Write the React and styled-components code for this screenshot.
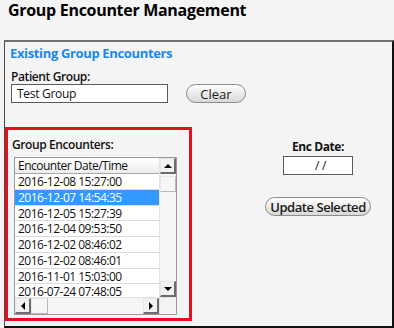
import React from 'react';
import styled, { createGlobalStyle } from 'styled-components';

const GlobalStyle = createGlobalStyle`
  html, body {
    margin: 0;
    padding: 0;
    background: #f4f4f4;
  }
  * {
    box-sizing: border-box;
  }
`;

const Page = styled.div`
  width: 394px;
  height: 328px;
  display: flex;
  flex-direction: column;
  background: #f4f4f4;
  font-family: "Open Sans", "Noto Sans", sans-serif;
  color: #111;
  overflow: hidden;
`;

const Title = styled.h1`
  margin: 0;
  height: 40px;
  padding: 0 0 0 8px;
  font-size: 16px;
  line-height: 20px;
  font-weight: 700;
  letter-spacing: -0.3px;
  color: #000;
`;

const Panel = styled.section`
  flex: 1;
  margin-left: 4px;
  border-top: 2px solid #707070;
  border-left: 1px solid #4a4a4a;
  border-right: 2px solid #111;
  border-bottom: 2px solid #111;
  display: flex;
  flex-direction: column;
`;

const PanelTitle = styled.h2`
  margin: 0;
  padding: 1px 0 0 5px;
  height: 27px;
  font-size: 13px;
  line-height: 20px;
  font-weight: 700;
  letter-spacing: -0.35px;
  color: #1b88f2;
`;

const Label = styled.div`
  font-size: 12px;
  line-height: 15px;
  font-weight: ${p => (p.$bold ? 700 : 600)};
  letter-spacing: -0.4px;
  color: #111;
  text-align: ${p => (p.$center ? 'center' : 'left')};
`;

const PatientBlock = styled.div`
  padding-left: 6px;
  display: flex;
  flex-direction: column;
`;

const InputRow = styled.div`
  display: flex;
  align-items: center;
  gap: 18px;
`;

const TextBox = styled.div`
  width: ${p => p.$w}px;
  height: 19px;
  border: 1px solid #5a5a5a;
  background: #fff;
  font-size: 12px;
  line-height: 17px;
  letter-spacing: -0.3px;
  padding-left: 5px;
  color: #111;
  text-align: ${p => (p.$center ? 'center' : 'left')};
`;

const PillButton = styled.button`
  width: ${p => p.$w}px;
  height: 19px;
  padding: 0;
  border: 1px solid #8c8c8c;
  border-radius: 10px;
  background: linear-gradient(#fdfdfd, #e8e8e8 60%, #d8d8d8);
  font-family: inherit;
  font-size: 13px;
  line-height: 16px;
  white-space: nowrap;
  letter-spacing: ${p => (p.$bold ? '-0.45px' : '0')};
  color: #1a1a1a;
  font-weight: ${p => (p.$bold ? 600 : 400)};
  margin-top: ${p => p.$mt || 0}px;
`;

const Lower = styled.div`
  display: grid;
  grid-template-columns: 187px 1fr;
  margin-top: 24px;
`;

const RedBox = styled.div`
  height: 194px;
  border: 3px solid #e3101f;
  padding: 7px 0 0 4px;
  display: flex;
  flex-direction: column;
  gap: 5px;
`;

const ListBox = styled.div`
  width: 163px;
  height: 158px;
  margin-left: 2px;
  border: 1px solid #9a9a9a;
  background: #fff;
  display: grid;
  grid-template-columns: 1fr 17px;
  grid-template-rows: 1fr 17px;
`;

const ListArea = styled.div`
  overflow: hidden;
  display: flex;
  flex-direction: column;
`;

const HeaderCell = styled.div`
  flex: none;
  height: 16px;
  border-bottom: 1px solid #a8a8a8;
  background: linear-gradient(#ffffff, #ededed);
  font-size: 12px;
  line-height: 15px;
  letter-spacing: -0.5px;
  padding-left: 3px;
  color: #111;
`;

const Row = styled.div`
  flex: none;
  height: 15.75px;
  border-bottom: 1px solid #dcdcdc;
  font-size: 12px;
  line-height: 15px;
  letter-spacing: -0.5px;
  padding-left: 3px;
  white-space: nowrap;
  background: ${p => (p.$selected ? '#3399ff' : '#fff')};
  color: ${p => (p.$selected ? '#fff' : '#111')};
`;

const VScroll = styled.div`
  display: flex;
  flex-direction: column;
  background: #f5f5f5;
  border-left: 1px solid #e4e4e4;
`;

const HScroll = styled.div`
  display: flex;
  background: #f5f5f5;
  border-top: 1px solid #e4e4e4;
`;

const ScrollBtn = styled.div`
  flex: none;
  width: ${p => (p.$horizontal ? '16px' : '100%')};
  height: ${p => (p.$horizontal ? '100%' : '16px')};
  background: #f2f2f2;
  border-top: 1px solid #e6e6e6;
  border-left: 1px solid #e6e6e6;
  border-right: 2px solid #6c6c6c;
  border-bottom: 2px solid #6c6c6c;
  display: flex;
  align-items: center;
  justify-content: center;
  margin-top: ${p => (p.$push ? 'auto' : '0')};
  margin-left: ${p => (p.$pushLeft ? 'auto' : '0')};
`;

const Thumb = styled.div`
  flex: none;
  width: ${p => (p.$horizontal ? '17px' : '100%')};
  height: ${p => (p.$horizontal ? '100%' : '16px')};
  margin-top: ${p => (p.$horizontal ? 0 : 2)}px;
  background: #f6f6f6;
  border-top: 1px solid #e8e8e8;
  border-left: 1px solid #e8e8e8;
  border-right: 1px solid #b8b8b8;
  border-bottom: 1px solid #b8b8b8;
`;

const Corner = styled.div`
  background: #f3f3f3;
  border-top: 1px solid #e4e4e4;
  border-left: 1px solid #e4e4e4;
`;

const RightCol = styled.div`
  padding: 12px 0 0 52px;
  display: flex;
  flex-direction: column;
  align-items: center;
`;

const DateWrap = styled.div`
  margin-top: 2px;
`;

const Arrow = ({ dir }) => {
  const pts = {
    up: '0,5 4,1 8,5',
    down: '0,1 4,5 8,1',
    left: '5,0 1,4 5,8',
    right: '1,0 5,4 1,8',
  }[dir];
  const w = dir === 'up' || dir === 'down' ? 8 : 6;
  const h = dir === 'up' || dir === 'down' ? 6 : 8;
  return (
    <svg width={w} height={h} viewBox={`0 0 ${w} ${h}`}>
      <polygon points={pts} fill="#000" />
    </svg>
  );
};

const encounters = [
  '2016-12-08 15:27:00',
  '2016-12-07 14:54:35',
  '2016-12-05 15:27:39',
  '2016-12-04 09:53:50',
  '2016-12-02 08:46:02',
  '2016-12-02 08:46:01',
  '2016-11-01 15:03:00',
  '2016-07-24 07:48:05',
];

const App = () => {
  return (
    <Page>
      <GlobalStyle />
      <Title>Group Encounter Management</Title>
      <Panel>
        <PanelTitle>Existing Group Encounters</PanelTitle>
        <PatientBlock>
          <Label>Patient Group:</Label>
          <InputRow>
            <TextBox $w={157}>Test Group</TextBox>
            <PillButton $w={60}>Clear</PillButton>
          </InputRow>
        </PatientBlock>
        <Lower>
          <RedBox>
            <Label>Group Encounters:</Label>
            <ListBox>
              <ListArea>
                <HeaderCell>Encounter Date/Time</HeaderCell>
                {encounters.map((e, i) => (
                  <Row key={i} $selected={i === 1}>{e}</Row>
                ))}
              </ListArea>
              <VScroll>
                <ScrollBtn><Arrow dir="up" /></ScrollBtn>
                <Thumb />
                <ScrollBtn $push><Arrow dir="down" /></ScrollBtn>
              </VScroll>
              <HScroll>
                <ScrollBtn $horizontal><Arrow dir="left" /></ScrollBtn>
                <Thumb $horizontal />
                <ScrollBtn $horizontal $pushLeft><Arrow dir="right" /></ScrollBtn>
              </HScroll>
              <Corner />
            </ListBox>
          </RedBox>
          <RightCol>
            <Label $center $bold>Enc Date:</Label>
            <DateWrap>
              <TextBox $w={70} $center>/ /</TextBox>
            </DateWrap>
            <PillButton $w={106} $mt={22} $bold>Update Selected</PillButton>
          </RightCol>
        </Lower>
      </Panel>
    </Page>
  );
};

export default App;
